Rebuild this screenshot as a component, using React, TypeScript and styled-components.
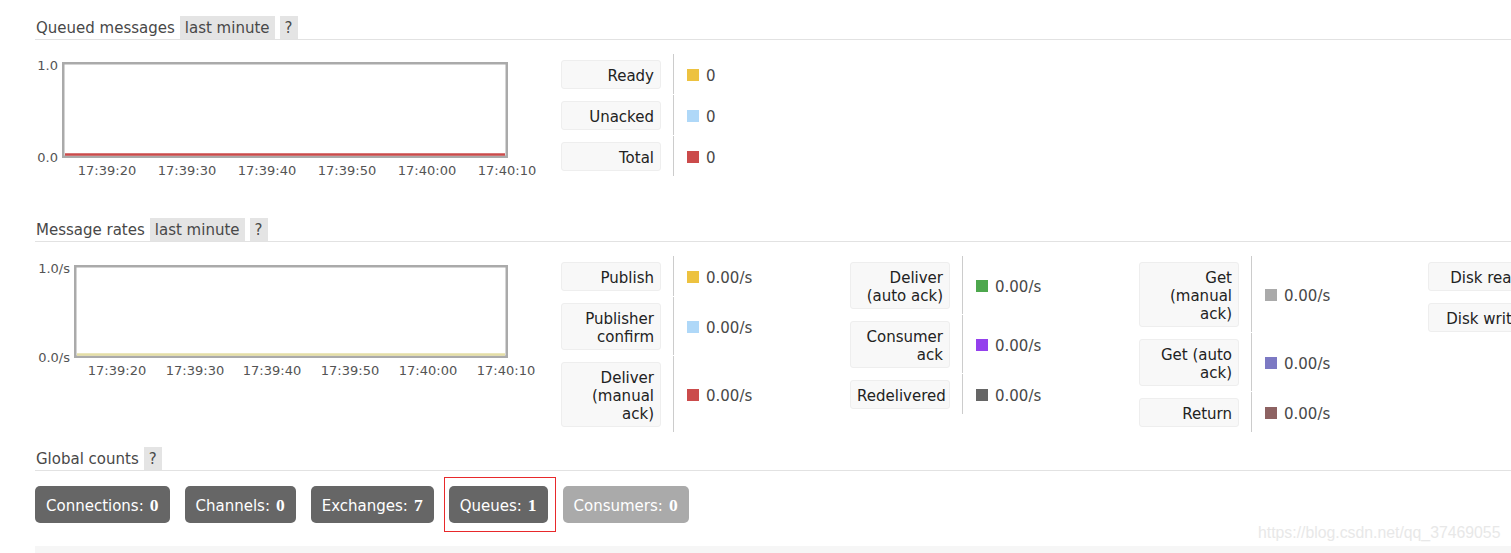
import React from "react";
import styled, { createGlobalStyle } from "styled-components";

const Global = createGlobalStyle`
  html, body { margin: 0; padding: 0; background: #fff; overflow: hidden; }
  body { font-family: "DejaVu Sans", Verdana, sans-serif; color: #484848; }
`;

const Page = styled.div`
  position: relative;
  width: 1511px;
  height: 553px;
  overflow: hidden;
  padding: 16px 0 0 35px;
  box-sizing: border-box;
`;

const Section = styled.section`
  margin-bottom: 15px;
`;

const Heading = styled.h2`
  margin: 0;
  display: flex;
  align-items: stretch;
  gap: 5px;
  height: 23px;
  line-height: 25px;
  font-size: 15px;
  font-weight: normal;
  color: #484848;
  border-bottom: 1px solid #e2e2e2;
  padding-left: 1px;
`;

const Pill = styled.span`
  background: #e4e4e4;
  color: #484848;
  padding: 0 5px;
`;

const Body = styled.div`
  display: flex;
  margin-top: 14px;
`;

const ChartBox = styled.div<{ $h: number }>`
  width: 526px;
  flex: none;
  height: ${(p) => p.$h}px;
  svg { display: block; font-family: "DejaVu Sans", Verdana, sans-serif; }
`;

const Legend = styled.div`
  display: flex;
  flex: none;
`;

const Column = styled.div`
  width: 289px;
  flex: none;
  display: flex;
  flex-direction: column;
  gap: 1px;
`;

const Row = styled.div`
  display: flex;
  align-items: stretch;
`;

const Label = styled.div`
  width: 100px;
  box-sizing: border-box;
  margin: 6px 0 5px;
  padding: 6px 6px 3px;
  line-height: 18px;
  font-size: 15px;
  text-align: right;
  color: #222;
  background: #f8f8f8;
  border: 1px solid #eee;
  border-radius: 3px;
  flex: none;
`;

const Value = styled.div`
  margin-left: 12px;
  border-left: 1px solid #ccc;
  padding: 3px 0 0 13px;
  display: flex;
  align-items: center;
  gap: 7px;
  font-size: 15px;
  color: #484848;
`;

const Swatch = styled.span<{ $c: string }>`
  width: 12px;
  height: 12px;
  margin-top: -1px;
  background: ${(p) => p.$c};
  flex: none;
`;

const Counts = styled.div`
  display: flex;
  gap: 15px;
  margin-top: 15px;
`;

const CountButton = styled.span<{ $muted?: boolean; $marked?: boolean }>`
  position: relative;
  display: inline-block;
  height: 37px;
  line-height: 38px;
  padding: 0 11px;
  box-sizing: border-box;
  border-radius: 5px;
  background: ${(p) => (p.$muted ? "#aaa" : "#666")};
  color: #fff;
  font-size: 15px;
  white-space: nowrap;
  b {
    font-family: "Liberation Serif", "Times New Roman", serif;
    font-weight: bold;
    font-size: 17.5px;
    margin-left: 6px;
  }
  ${(p) =>
    p.$marked &&
    `&::after {
      content: "";
      position: absolute;
      left: -5px; right: -8px; top: -9px; bottom: -9px;
      border: 1px solid #e8292b;
    }`}
`;

const BottomBar = styled.div`
  margin-top: 23px;
  height: 30px;
  background: #f6f6f6;
`;

const Watermark = styled.div`
  position: absolute;
  left: 1258px;
  top: 524px;
  font-family: "Liberation Sans", Arial, sans-serif;
  font-size: 15.8px;
  color: #e8e8e8;
  white-space: nowrap;
`;

type Item = { label: React.ReactNode; color: string; value: string };

const LegendColumn = ({ items }: { items: Item[] }) => (
  <Column>
    {items.map((it, i) => (
      <Row key={i}>
        <Label>{it.label}</Label>
        <Value>
          <Swatch $c={it.color} />
          {it.value}
        </Value>
      </Row>
    ))}
  </Column>
);

const ticks1 = [72, 152, 232, 312, 392, 472];
const ticks2 = [82, 160, 237, 315, 393, 471];
const times = ["17:39:20", "17:39:30", "17:39:40", "17:39:50", "17:40:00", "17:40:10"];

const Chart = ({
  box,
  yTop,
  yBot,
  ticks,
  lineColor,
  height,
}: {
  box: { x0: number; x1: number; y0: number; y1: number };
  yTop: string;
  yBot: string;
  ticks: number[];
  lineColor: string;
  height: number;
}) => (
  <ChartBox $h={height}>
    <svg width={526} height={height}>
      <text x={box.x0 - 4} y={box.y0 + 8} fontSize={13} fill="#545454" textAnchor="end">
        {yTop}
      </text>
      <text x={box.x0 - 4} y={box.y1 + 3.5} fontSize={13} fill="#545454" textAnchor="end">
        {yBot}
      </text>
      <rect
        x={box.x0 + 1.25}
        y={box.y0 + 1.25}
        width={box.x1 - box.x0 - 2.5}
        height={box.y1 - box.y0 - 2.5}
        fill="#fff"
        stroke="#aaa"
        strokeWidth={2.5}
      />
      <line x1={box.x0 + 3} x2={box.x1 - 3} y1={box.y1 - 3.5} y2={box.y1 - 3.5} stroke={lineColor} strokeWidth={2.5} />
      {ticks.map((x, i) => (
        <text key={i} x={x} y={box.y1 + 16.5} fontSize={13} fill="#545454" textAnchor="middle">
          {times[i]}
        </text>
      ))}
    </svg>
  </ChartBox>
);

export default function App() {
  return (
    <>
      <Global />
      <Page>
        <Section>
          <Heading>
            Queued messages<Pill>last minute</Pill>
            <Pill>?</Pill>
          </Heading>
          <Body>
            <Chart
              box={{ x0: 27, x1: 473, y0: 8, y1: 104 }}
              yTop="1.0"
              yBot="0.0"
              ticks={ticks1}
              lineColor="#cb4b4b"
              height={149}
            />
            <Legend>
              <LegendColumn
                items={[
                  { label: "Ready", color: "#edc240", value: "0" },
                  { label: "Unacked", color: "#afd8f8", value: "0" },
                  { label: "Total", color: "#cb4b4b", value: "0" },
                ]}
              />
            </Legend>
          </Body>
        </Section>

        <Section>
          <Heading>
            Message rates<Pill>last minute</Pill>
            <Pill>?</Pill>
          </Heading>
          <Body>
            <Chart
              box={{ x0: 39, x1: 473, y0: 9, y1: 102 }}
              yTop="1.0/s"
              yBot="0.0/s"
              ticks={ticks2}
              lineColor="#e4dea6"
              height={130}
            />
            <Legend>
              <LegendColumn
                items={[
                  { label: "Publish", color: "#edc240", value: "0.00/s" },
                  { label: "Publisher confirm", color: "#afd8f8", value: "0.00/s" },
                  { label: "Deliver (manual ack)", color: "#cb4b4b", value: "0.00/s" },
                ]}
              />
              <LegendColumn
                items={[
                  { label: "Deliver (auto ack)", color: "#4da74d", value: "0.00/s" },
                  { label: "Consumer ack", color: "#9440ed", value: "0.00/s" },
                  { label: "Redelivered", color: "#666666", value: "0.00/s" },
                ]}
              />
              <LegendColumn
                items={[
                  { label: "Get (manual ack)", color: "#aaaaaa", value: "0.00/s" },
                  { label: "Get (auto ack)", color: "#7c79c3", value: "0.00/s" },
                  { label: "Return", color: "#8d6262", value: "0.00/s" },
                ]}
              />
              <LegendColumn
                items={[
                  { label: "Disk read", color: "#afd8f8", value: "0.00/s" },
                  { label: "Disk write", color: "#edc240", value: "0.00/s" },
                ]}
              />
            </Legend>
          </Body>
        </Section>

        <Section>
          <Heading>
            Global counts<Pill>?</Pill>
          </Heading>
          <Counts>
            <CountButton>
              Connections:<b>0</b>
            </CountButton>
            <CountButton>
              Channels:<b>0</b>
            </CountButton>
            <CountButton>
              Exchanges:<b>7</b>
            </CountButton>
            <CountButton $marked>
              Queues:<b>1</b>
            </CountButton>
            <CountButton $muted>
              Consumers:<b>0</b>
            </CountButton>
          </Counts>
          <BottomBar />
        </Section>
        <Watermark>https://blog.csdn.net/qq_37469055</Watermark>
      </Page>
    </>
  );
}
